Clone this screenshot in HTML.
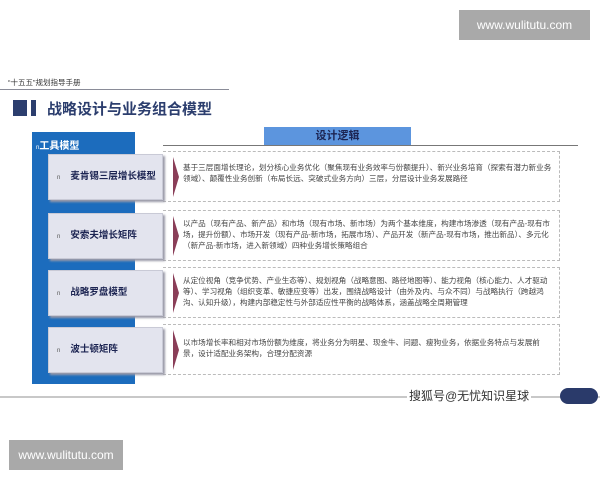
<!DOCTYPE html>
<html><head><meta charset="utf-8"><style>
*{margin:0;padding:0;box-sizing:border-box}
body{width:600px;height:480px;background:#fff;position:relative;overflow:hidden;font-family:"Liberation Sans","Noto Sans CJK SC",sans-serif}
.a{position:absolute}
.wm{background:#a9a9a9;color:#fff;font-size:12px;text-align:center;line-height:30px}
.gray{background:#e3e4ee;border:1px solid #c9cad6;box-shadow:2px 2px 2px #9a9aa8;left:48px;width:115px;height:46px;font-size:9.5px;font-weight:bold;color:#1c2452;line-height:44px;padding-left:8px;white-space:nowrap}
.gray span{font-size:6px;font-weight:normal;color:#555;margin-right:10px}
.dot{left:163px;width:397px;border:1px dashed #bbb;border-left:none}
.tri{width:0;height:0;border-top:20px solid transparent;border-bottom:20px solid transparent;border-left:6px solid #8a3e58}
.tx{font-size:7.6px;line-height:11px;color:#444;width:372px;left:183px}
</style></head><body>
<div class="a wm" style="left:459px;top:10px;width:131px;height:30px">www.wulitutu.com</div>
<div class="a wm" style="left:9px;top:440px;width:114px;height:30px">www.wulitutu.com</div>
<div class="a" style="left:8px;top:77px;font-size:7.5px;color:#333">“十五五”规划指导手册</div>
<div class="a" style="left:0;top:89px;width:229px;height:1px;background:#8a8c98"></div>
<div class="a" style="left:13px;top:100px;width:14px;height:16px;background:#2c3e6e"></div>
<div class="a" style="left:31px;top:100px;width:5px;height:16px;background:#2c3e6e"></div>
<div class="a" style="left:47px;top:98px;font-size:15px;font-weight:bold;color:#2c3e6e">战略设计与业务组合模型</div>
<div class="a" style="left:32px;top:132px;width:103px;height:252px;background:#1c6cbd"></div>
<div class="a" style="left:36px;top:137px;font-size:10px;font-weight:bold;color:#fff"><span style="font-size:6px;font-weight:normal">n</span>工具模型</div>
<div class="a" style="left:264px;top:127px;width:147px;height:19px;background:#5c95de;text-align:center;font-size:11px;font-weight:bold;color:#1c2452;line-height:19px">设计逻辑</div>
<div class="a" style="left:163px;top:145px;width:415px;height:1px;background:#777"></div>

<div class="a dot" style="top:151px;height:51px"></div>
<div class="a gray" style="top:154px"><span>n</span>麦肯锡三层增长模型</div>
<div class="a tri" style="left:173px;top:157px"></div>
<div class="a tx" style="top:162px">基于三层面增长理论，划分核心业务优化（聚焦现有业务效率与份额提升）、新兴业务培育（探索有潜力新业务领域）、颠覆性业务创新（布局长远、突破式业务方向）三层，分层设计业务发展路径</div>

<div class="a dot" style="top:210px;height:51px"></div>
<div class="a gray" style="top:213px"><span>n</span>安索夫增长矩阵</div>
<div class="a tri" style="left:173px;top:216px"></div>
<div class="a tx" style="top:218px">以产品（现有产品、新产品）和市场（现有市场、新市场）为两个基本维度，构建市场渗透（现有产品-现有市场，提升份额）、市场开发（现有产品-新市场，拓展市场）、产品开发（新产品-现有市场，推出新品）、多元化（新产品-新市场，进入新领域）四种业务增长策略组合</div>

<div class="a dot" style="top:267px;height:51px"></div>
<div class="a gray" style="top:270px"><span>n</span>战略罗盘模型</div>
<div class="a tri" style="left:173px;top:273px"></div>
<div class="a tx" style="top:275px">从定位视角（竞争优势、产业生态等）、规划视角（战略意图、路径地图等）、能力视角（核心能力、人才驱动等）、学习视角（组织变革、敏捷应变等）出发，围绕战略设计（由外及内、与众不同）与战略执行（跨越鸿沟、认知升级），构建内部稳定性与外部适应性平衡的战略体系，涵盖战略全周期管理</div>

<div class="a dot" style="top:324px;height:51px"></div>
<div class="a gray" style="top:327px"><span>n</span>波士顿矩阵</div>
<div class="a tri" style="left:173px;top:330px"></div>
<div class="a tx" style="top:337px">以市场增长率和相对市场份额为维度，将业务分为明星、现金牛、问题、瘦狗业务，依据业务特点与发展前景，设计适配业务架构，合理分配资源</div>

<div class="a" style="left:0;top:396px;width:600px;height:2px;background:#c8c8c8"></div>
<div class="a" style="left:560px;top:388px;width:38px;height:16px;border-radius:8px;background:#2a3a6a"></div>
<div class="a" style="left:407px;top:387px;font-size:12px;color:#333;background:#fff;padding:0 2px;white-space:nowrap">搜狐号@无忧知识星球</div>
</body></html>
